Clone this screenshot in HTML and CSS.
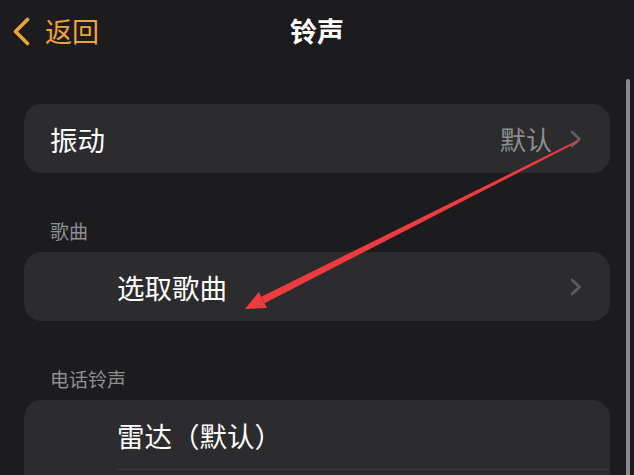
FILE: index.html
```html
<!DOCTYPE html>
<html>
    <head>
        <meta http-equiv="content-type" content="text/html;charset=utf-8">
        <title>铃声</title>
        <link rel="stylesheet" href="styles.css">
    </head>
    <body>
        <div class="screen">
            <!-- 导航栏 -->
            <header class="nav">
                <a class="back" href="#">
                    <svg class="back-icon" width="18" height="29" viewBox="0 0 18 29">
                        <path d="M15.5 2.5 L3.5 14.5 L15.5 26.5" fill="none" stroke="currentColor" stroke-width="3.6" stroke-linecap="round" stroke-linejoin="round"/>
                    </svg>
                    <span>返回</span>
                </a>
                <h1 class="title">铃声</h1>
                <div></div>
            </header>

            <main class="list">
                <!-- 振动 -->
                <section class="group">
                    <div class="card">
                        <div class="row">
                            <span class="row-text">振动</span>
                            <span class="row-value">默认</span>
                            <svg class="chevron" width="12" height="18" viewBox="0 0 12 18">
                                <path d="M2 2 L9.5 9 L2 16" fill="none" stroke="currentColor" stroke-width="2.6" stroke-linecap="round" stroke-linejoin="round"/>
                            </svg>
                        </div>
                    </div>
                </section>

                <!-- 歌曲 -->
                <section class="group">
                    <h2 class="group-label">歌曲</h2>
                    <div class="card">
                        <div class="row row-indent">
                            <span class="row-text">选取歌曲</span>
                            <svg class="chevron" width="12" height="18" viewBox="0 0 12 18">
                                <path d="M2 2 L9.5 9 L2 16" fill="none" stroke="currentColor" stroke-width="2.6" stroke-linecap="round" stroke-linejoin="round"/>
                            </svg>
                        </div>
                    </div>
                </section>

                <!-- 电话铃声 -->
                <section class="group">
                    <h2 class="group-label">电话铃声</h2>
                    <div class="card">
                        <div class="row row-indent">
                            <span class="row-text">雷达（默认）</span>
                        </div>
                        <div class="row row-indent"></div>
                    </div>
                </section>
            </main>

            <!-- 滚动条 -->
            <div class="scrollbar"></div>

            <!-- 红色箭头标注 -->
            <svg class="arrow" width="634" height="475" viewBox="0 0 634 475">
                <polygon points="577.6,140.3 578.4,141.7 264.5,303.2 261.3,296.8" fill="#ee3b3f"/>
                <polygon points="245,309 258.8,292 267,308" fill="#ee3b3f"/>
            </svg>
        </div>
    </body>
</html>
```

FILE: styles.css
```css
body {
    margin: 0;
    background-color: #1c1c1e;
    font-family: "Noto Sans CJK SC", "Noto Sans", sans-serif;
}
.screen {
    position: relative;
    width: 634px;
    height: 475px;
    overflow: hidden;
    background: #1c1c1e;
}
/* 导航栏 */
.nav {
    display: grid;
    grid-template-columns: 1fr auto 1fr;
    align-items: center;
    height: 62px;
}
.back {
    display: flex;
    align-items: center;
    gap: 15px;
    padding-left: 12px;
    color: #efa43b;
    font-size: 27px;
    line-height: 30px;
    text-decoration: none;
}
.back-icon {
    display: block;
}
.title {
    margin: 0;
    color: #fff;
    font-size: 27px;
    font-weight: 700;
    line-height: 30px;
}
/* 列表 */
.list {
    padding: 42px 24px 0;
}
.group + .group {
    margin-top: 46px;
}
.group-label {
    margin: 0 0 9px;
    padding-left: 26px;
    color: #8e8e93;
    font-size: 19px;
    font-weight: 400;
    line-height: 24px;
}
.card {
    background: #2c2c2e;
    border-radius: 18px;
    overflow: hidden;
}
.row {
    display: flex;
    align-items: center;
    height: 69px;
    padding: 0 28px 0 26px;
    color: #fff;
}
.row-indent {
    margin-left: 93px;
    padding-left: 0;
}
.row + .row {
    border-top: 1px solid #3a3a3c;
}
.row-text {
    flex: 1;
    font-size: 27.5px;
    line-height: 30px;
}
.row-value {
    margin-right: 18px;
    color: #8e8e93;
    font-size: 26px;
    line-height: 30px;
}
.chevron {
    display: block;
    color: #5e5e62;
}
/* 滚动条 */
.scrollbar {
    position: absolute;
    top: 79px;
    right: 4px;
    width: 4px;
    height: 420px;
    border-radius: 2px;
    background: #8a8a8d;
}
/* 标注箭头 */
.arrow {
    position: absolute;
    left: 0;
    top: 0;
    pointer-events: none;
}
```
